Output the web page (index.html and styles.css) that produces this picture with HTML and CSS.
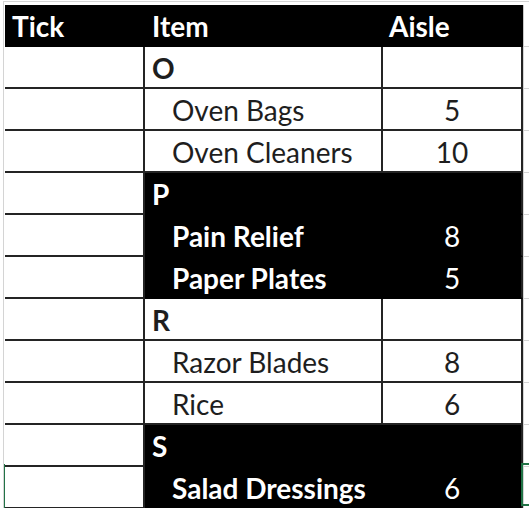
FILE: index.html
```html
<!DOCTYPE html>
<html>
<head>
<meta charset="utf-8">
<link rel="stylesheet" href="styles.css">
</head>
<body>
<div class="sheet">
  <div class="grid">
    <div class="cell head tick-col">Tick</div>
    <div class="cell head">Item</div>
    <div class="cell head aisle-head">Aisle</div>
    <div class="cell ghost ghost-head"></div>

    <div class="cell tick-col"></div>
    <div class="cell group">O</div>
    <div class="cell num"></div>
    <div class="cell ghost"></div>

    <div class="cell tick-col"></div>
    <div class="cell item">Oven Bags</div>
    <div class="cell num">5</div>
    <div class="cell ghost"></div>

    <div class="cell tick-col"></div>
    <div class="cell item">Oven Cleaners</div>
    <div class="cell num">10</div>
    <div class="cell ghost"></div>

    <div class="cell tick-col"></div>
    <div class="cell group dark">P</div>
    <div class="cell num dark"></div>
    <div class="cell ghost"></div>

    <div class="cell tick-col"></div>
    <div class="cell item dark">Pain Relief</div>
    <div class="cell num dark">8</div>
    <div class="cell ghost"></div>

    <div class="cell tick-col"></div>
    <div class="cell item dark">Paper Plates</div>
    <div class="cell num dark">5</div>
    <div class="cell ghost"></div>

    <div class="cell tick-col"></div>
    <div class="cell group">R</div>
    <div class="cell num"></div>
    <div class="cell ghost"></div>

    <div class="cell tick-col"></div>
    <div class="cell item">Razor Blades</div>
    <div class="cell num">8</div>
    <div class="cell ghost"></div>

    <div class="cell tick-col"></div>
    <div class="cell item">Rice</div>
    <div class="cell num">6</div>
    <div class="cell ghost"></div>

    <div class="cell tick-col"></div>
    <div class="cell group dark">S</div>
    <div class="cell num dark"></div>
    <div class="cell ghost"></div>

    <div class="cell tick-col"></div>
    <div class="cell item dark">Salad Dressings</div>
    <div class="cell num dark">6</div>
    <div class="cell ghost"></div>

    <div class="cell tail tail-first"></div>
    <div class="cell tail"></div>
    <div class="cell tail"></div>
    <div class="cell tail"></div>
  </div>
  <div class="sel-left"></div>
  <div class="sel-box"></div>
</div>
</body>
</html>
```

FILE: styles.css
```css
html, body {
  margin: 0;
  padding: 0;
  background: #ffffff;
  overflow: hidden;
}

.sheet {
  position: relative;
  margin-top: 1px;
  margin-left: 3px;
  border-top: 1px solid #d4d4d4;
  border-left: 1px solid #d4d4d4;
  padding-top: 3px;
  padding-left: 1px;
  height: 507px;
  box-sizing: border-box;
  overflow: hidden;
}

.grid {
  display: grid;
  grid-template-columns: 140px 238px 140px 20px;
  grid-auto-rows: 42px;
  font-family: "Lato", "Open Sans", sans-serif;
  font-size: 28px;
  color: #1e1e1e;
}

.cell {
  box-sizing: border-box;
  border-bottom: 2px solid #242424;
  border-right: 2px solid #242424;
  display: flex;
  align-items: flex-end;
  padding-bottom: 5px;
  line-height: 1;
  white-space: nowrap;
  background: #ffffff;
}

.head {
  background: #000000;
  border-color: #000000;
  color: #ffffff;
  font-weight: 700;
  padding-left: 7px;
}

.head.tick-col {
  border-right-color: #000000;
}

.aisle-head {
  padding-left: 6px;
}

.group {
  font-weight: 700;
  padding-left: 7px;
}

.item {
  padding-left: 27px;
}

.num {
  justify-content: center;
}

.dark {
  background: #000000;
  color: #ffffff;
  border-bottom-color: #000000;
  font-weight: 700;
}

.item.dark,
.group.dark {
  border-right-color: #000000;
}

.num.dark {
  font-weight: 400;
}

.ghost {
  border-right: none;
  border-bottom: 1px solid #d4d4d4;
  border-left: 1px solid #d4d4d4;
  background: transparent;
}

.ghost-head {
  border-left: 1px solid #c8c8c8;
}

.tail {
  border-bottom: none;
  border-right: 1px solid #d4d4d4;
  background: transparent;
}

.tail:last-child {
  border-right: none;
}

.sel-left {
  position: absolute;
  left: -1px;
  top: 462px;
  width: 2px;
  height: 44px;
  background: #217346;
}

.sel-box {
  position: absolute;
  left: 517px;
  top: 461px;
  width: 30px;
  height: 43px;
  border: 2px solid #217346;
  box-sizing: border-box;
}
```
